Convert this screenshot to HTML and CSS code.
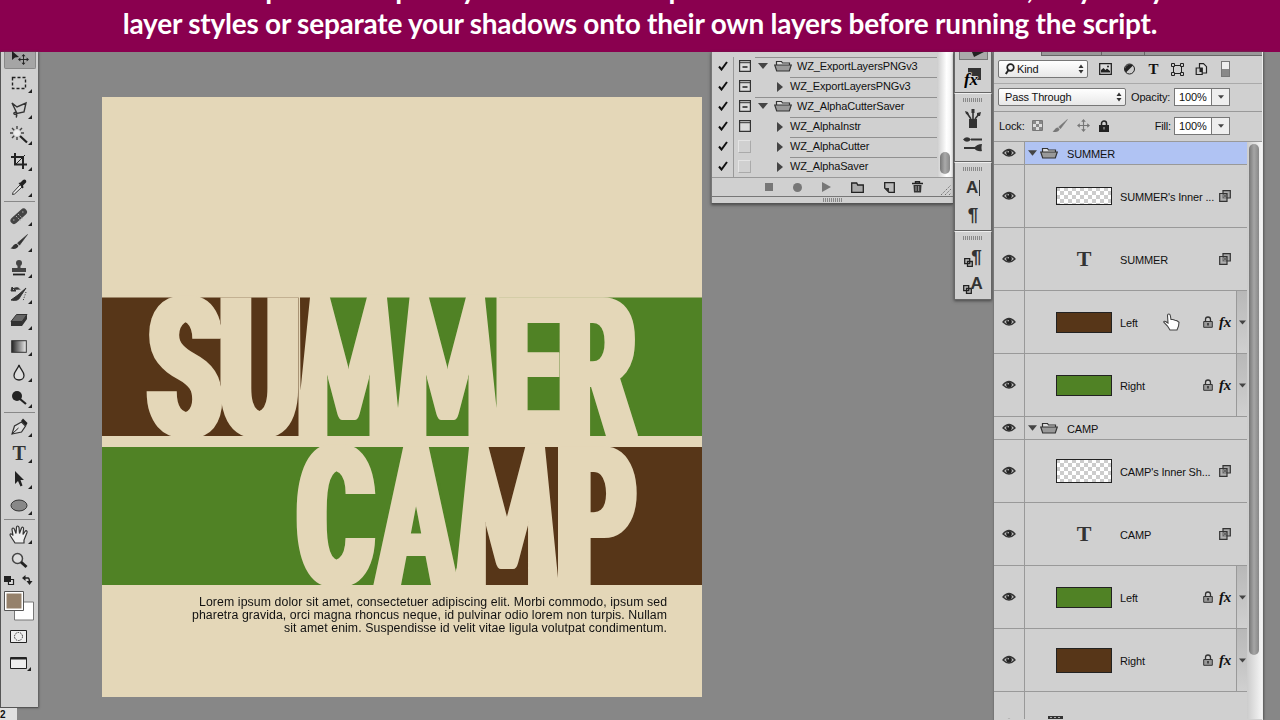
FILE: index.html
```
<!DOCTYPE html>
<html lang="en">
<head>
  <meta charset="UTF-8">
  <meta name="viewport" content="width=device-width, initial-scale=1.0">
  <title>Alpha Cutter Saver</title>
  <link rel="stylesheet" href="styles.css">
</head>
<body>
  <!-- Shared icons -->
  <svg class="defs" width="0" height="0">
    <defs>
      <pattern id="checks" width="8" height="8" patternUnits="userSpaceOnUse">
        <rect width="8" height="8" fill="#fff"/>
        <path d="M0 0h4v4H0zM4 4h4v4H4z" fill="#ccc"/>
      </pattern>
      <linearGradient id="fade"><stop offset="0" stop-color="#222"/><stop offset="1" stop-color="#eee"/></linearGradient>
      <symbol id="eye" viewBox="0 0 14 10">
        <path d="M1 5Q7-2 13 5Q7 11 1 5z" fill="#bbb" stroke="#333" stroke-width="1.3"/>
        <circle cx="7" cy="4.7" r="2.8" fill="#222"/><circle cx="6.2" cy="3.8" r=".8" fill="#ccc"/>
      </symbol>
      <symbol id="folder" viewBox="0 0 18 12">
        <path d="M2.5 5V1.5h5l1 1.5h7V5" fill="#ddd" stroke="#333" stroke-width="1.2"/>
        <path d="M.7 5h16.6l-2 6H2.7z" fill="#999" stroke="#333" stroke-width="1.2"/>
      </symbol>
      <symbol id="check" viewBox="0 0 10 10"><path d="M1 5.5l2.5 3L9 1" fill="none" stroke="#111" stroke-width="2"/></symbol>
      <symbol id="down" viewBox="0 0 10 6"><path d="M0 0h10L5 6z" fill="#444"/></symbol>
      <symbol id="right" viewBox="0 0 6 10"><path d="M0 0v10l6-5z" fill="#444"/></symbol>
      <symbol id="updown" viewBox="0 0 6 10"><path d="M.5 4L3 .5 5.5 4zM.5 6L3 9.500 5.500 6z" fill="#333"/></symbol>
      <symbol id="lock" viewBox="0 0 10 12">
        <path d="M2.500 6V3.500a2.500 2.500 0 0 1 5 0V6" fill="none" stroke="#333" stroke-width="1.300"/>
        <path d="M.7 5.500h8.600v5.800H.7z" fill="#999" stroke="#333"/><path d="M5 7v2.500" stroke="#222" stroke-width="1.400"/>
      </symbol>
      <symbol id="clone" viewBox="0 0 12 12">
        <path d="M4 .7h7.300V8H4z" fill="#aaa" stroke="#333" stroke-width="1.200"/>
        <path d="M.7 3.500H8v7.800H.7z" fill="#999" fill-opacity=".6" stroke="#333" stroke-width="1.200"/>
        <path d="M4.500 4l3 3.500M7.500 4l-3 3.500" stroke="#333" stroke-width=".6"/>
      </symbol>
      <symbol id="panel-full" viewBox="0 0 12 12"><path d="M.6 .6h10.800v10.800H.6z" fill="#ddd" stroke="#333" stroke-width="1.200"/><path d="M1 2.700h10" stroke="#333"/></symbol>
      <symbol id="panel-dash" viewBox="0 0 12 12"><path d="M.6 .6h10.800v10.800H.6z" fill="#ddd" stroke="#333" stroke-width="1.200"/><path d="M1 2.700h10" stroke="#333"/><path d="M3.500 7h5" stroke="#222" stroke-width="1.500"/></symbol>
      <symbol id="arrows" viewBox="0 0 14 14">
        <path d="M7 2v10M2 7h10" stroke="currentColor" stroke-width="1.200"/>
        <path d="M7 0L4.500 3h5zM7 14l-2.500-3h5zM0 7l3-2.500v5zM14 7l-3-2.500v5z" fill="currentColor"/>
      </symbol>
      <symbol id="brush" viewBox="0 0 18 16">
        <path d="M17.500 .5L7.500 9l2 2.200z" fill="currentColor" stroke="currentColor" stroke-width=".6"/>
        <path d="M8.500 11.800C8 14.500 4 15.800 .5 14.200 3 13.500 3 10 6.500 9.800z" fill="currentColor"/>
      </symbol>
      <symbol id="marks" viewBox="0 0 20 4"><path d="M.5 0v4M2.500 0v4M4.500 0v4M6.500 0v4M8.500 0v4M10.500 0v4M12.500 0v4M14.500 0v4M16.500 0v4M18.500 0v4" stroke="#888"/></symbol>
    </defs>
  </svg>

  <div class="banner">
    <p class="banner-top">It is not complete in a split layer and has a drop shadow. Remove them now, only if any</p>
    <p>layer styles or separate your shadows onto their own layers before running the script.</p>
  </div>

  <div class="workspace">
    <!-- Tools -->
    <div class="left">
      <div class="toolbar">
        <div class="tool active"><svg width="20" height="18" viewBox="0 0 20 18"><path d="M2 0v9l3-2.500 4-.5z" fill="#222"/><svg x="8" y="3" width="11" height="11" color="#222"><use href="#arrows"/></svg></svg></div>
        <div class="tool more"><svg width="16" height="16" viewBox="0 0 16 16"><path d="M1.500 2.500h13v11h-13z" fill="none" stroke="#222" stroke-width="1.400" stroke-dasharray="3 2"/></svg></div>
        <div class="tool more"><svg width="18" height="18" viewBox="0 0 18 18"><path d="M2 3l5 4 9-4-2 9-7 1.500zM7 13c-4-2-4 2-1 1.500 1-.5 1 1.500 0 3" fill="none" stroke="#333" stroke-width="1.400"/></svg></div>
        <div class="tool more"><svg width="18" height="18" viewBox="0 0 18 18"><path d="M10 10l7 6.500" stroke="#222" stroke-width="2.200"/><circle cx="7" cy="7" r="3" fill="#eee"/><path d="M7 0v3M7 11v3M0 7h3M11 7h3M2 2l2.200 2.200M12 2L9.800 4.200M2 12l2.200-2.200" stroke="#444" stroke-width="1.400"/></svg></div>
        <div class="tool more"><svg width="16" height="16" viewBox="0 0 16 16"><path d="M4 0v11.500h12M0 4h12v12" fill="none" stroke="#222" stroke-width="2"/><path d="M4.500 11.500L14 2" stroke="#222"/></svg></div>
        <div class="tool more"><svg width="16" height="17" viewBox="0 0 16 17"><path d="M9 6l-7 7.500-.5 2 2-.5 7.500-7" fill="#eee" stroke="#333"/><path d="M7.500 4l2-.5L12 1c2-1.500 4 .5 3 2.500l-3 3 .5 2-1 1z" fill="#222"/></svg></div>
        <div class="rule"></div>
        <div class="tool more"><svg width="18" height="18" viewBox="0 0 18 18"><path d="M4 13.500L13.500 5" stroke="#444" stroke-width="7" stroke-linecap="round"/><path d="M6 9l4.500 4.500M8 7l4.500 4.500M3 13h2M12 5h2" stroke="#aaa" stroke-dasharray="1.500 1"/></svg></div>
        <div class="tool more"><svg class="ink" width="18" height="16"><use href="#brush"/></svg></div>
        <div class="tool more"><svg width="16" height="16" viewBox="0 0 16 16"><circle cx="8" cy="3" r="3" fill="#444"/><path d="M6.500 4h3v4h5.500v4H1V8h5.500z" fill="#444"/><path d="M2 14.500h12" stroke="#222" stroke-width="1.800"/></svg></div>
        <div class="tool more"><svg width="18" height="16" viewBox="0 0 18 16"><path d="M16 2L8 9 1 14c5 1 8 0 9-3z" fill="#333" stroke="#333"/><path d="M2 4c3-3 6-3 8-.5M1 5h5l-4-4z" fill="#333" stroke="#333"/><path d="M16 6l-3 9" stroke="#333" stroke-dasharray="1 1.500"/></svg></div>
        <div class="tool more"><svg width="18" height="14" viewBox="0 0 18 14"><path d="M6.500 1.500H17l-5 7H1z" fill="#666" stroke="#333"/><path d="M1 8.500h11V13H1zM12 8.500l5-7V6l-5 7z" fill="#333"/></svg></div>
        <div class="tool more"><svg width="16" height="13"><rect x=".7" y=".7" width="14.600" height="11.600" fill="url(#fade)" stroke="#333"/></svg></div>
        <div class="tool more"><svg width="12" height="17" viewBox="0 0 12 17"><path d="M6 1c1 4 5 6.500 5 10.500a5 4.500 0 0 1-10 0C1 7.500 5 5 6 1z" fill="#ddd" stroke="#222" stroke-width="1.300"/></svg></div>
        <div class="tool more"><svg width="16" height="16" viewBox="0 0 16 16"><circle cx="6" cy="6" r="5" fill="#222"/><path d="M9 9l6 5" stroke="#222" stroke-width="2.200"/></svg></div>
        <div class="rule"></div>
        <div class="tool more"><svg width="18" height="18" viewBox="0 0 18 18"><path d="M2 16L4.500 8l7-4 4 4-4 6z" fill="#ddd" stroke="#333" stroke-width="1.200"/><path d="M2 16l6.500-6" stroke="#222"/><path d="M11 3l2-2.500 4.500 4.500L16 8z" fill="#222"/></svg></div>
        <div class="tool more type">T</div>
        <div class="tool more"><svg width="12" height="16" viewBox="0 0 12 16"><path d="M2 0v13l3-3 2.500 5.500 2-1L7.500 9H11z" fill="#222"/></svg></div>
        <div class="tool more"><svg width="18" height="13"><ellipse cx="9" cy="6.500" rx="8" ry="5.500" fill="#888" stroke="#333"/></svg></div>
        <div class="rule"></div>
        <div class="tool more"><svg width="20" height="19" viewBox="0 0 20 19"><path d="M6 18L1.500 11C0 8.500 2.500 8 4 10.500L3 4.500C3 2.500 5 2.500 5.500 4.500L7 8.500 7.500 2.500c0-2 2-2 2.500 0L10.500 8.500 12.500 3c.5-1.500 2.500-1 2 1L14 9.500l2-3c1-1.500 2.500-.5 2 1L15 15v3z" fill="#eee" stroke="#333" stroke-width="1.200"/></svg></div>
        <div class="tool"><svg width="17" height="17" viewBox="0 0 17 17"><circle cx="6.500" cy="6.500" r="5" fill="#ddd" stroke="#444" stroke-width="1.500"/><path d="M10 10l5.500 5" stroke="#222" stroke-width="3"/></svg></div>
        <svg class="swatches" width="36" height="104" viewBox="1 573 36 104">
          <path d="M8.500 579.500h5v5h-5z" fill="#ddd" stroke="#222" stroke-width="1.200"/><path d="M4 576h7v6H4z" fill="#222"/>
          <path d="M24 578h4q1.500 0 1.500 5" fill="none" stroke="#222" stroke-width="1.600"/><path d="M22 578l3.500-3v6zM26.500 581h6l-3 4z" fill="#222"/>
          <path d="M14.500 602h19v18h-19z" fill="#fff" stroke="#777"/>
          <path d="M4.500 591.500h19v19h-19z" fill="#fff" stroke="#555"/><path d="M6.500 593.500h15v15h-15z" fill="#95816b"/>
          <path d="M10.500 630.500h16v12h-16z" fill="#eee" stroke="#222"/><circle cx="18.500" cy="636.500" r="4" fill="#eee" stroke="#333" stroke-dasharray="1.500 1"/>
          <path d="M10.500 657.500h16v11h-16z" fill="#eee" stroke="#222"/><path d="M11 658.500h15" stroke="#222" stroke-width="2"/><path d="M31 667v4h-4z" fill="#222"/>
        </svg>
      </div>
      <div class="ruler">2</div>
    </div>

    <!-- Document -->
    <svg class="poster" width="600" height="600" viewBox="102 97 600 600">
      <filter id="widen" x="-5%" width="110%"><feMorphology operator="dilate" radius="5 0"/></filter>
      <rect x="102" y="97" width="600" height="600" fill="#e4d7b8"/>
      <rect x="102" y="297.500" width="218" height="138.500" fill="#573618"/>
      <rect x="320" y="297.500" width="382" height="138.500" fill="#508225"/>
      <rect x="102" y="447" width="378" height="138" fill="#508225"/>
      <rect x="480" y="447" width="222" height="138" fill="#573618"/>
      <!-- each letter is set on its own scale -->
      <g class="headline" filter="url(#widen)">
        <text transform="translate(184.500 436) scale(.6 1)">S</text>
        <text transform="translate(259.500 436) scale(.62 1)">U</text>
        <text class="lato" transform="translate(348.500 436) scale(.5 1)">M</text>
        <text class="lato" transform="translate(447.500 436) scale(.5 1)">M</text>
        <text transform="translate(529 436) scale(.61 1)">E</text>
        <text transform="translate(597 436) scale(.61 1)">R</text>
        <text transform="translate(335.500 585) scale(.59 1)">C</text>
        <text class="thin" transform="translate(416 585) scale(.58 1)">A</text>
        <text class="lato" transform="translate(507 585) scale(.5 1)">M</text>
        <text transform="translate(597.500 585) scale(.61 1)">P</text>
      </g>
      <!-- gaps between the letters close towards the bottom of the band -->
      <path d="M298.500 297h8v139h-8zM390 297h15v139h-15zM490 297h9v139h-9zM456 447h9v138h-9zM549 447h14v138h-14z" fill="#e4d7b8"/>
      <path d="M300 297.500h10l-9.500 93zM545 447h13v131z" fill="#573618"/>
      <path d="M387 297.500h22.500L398 408zM485 297.500h11.500V408zM433 447h36l-12.500 123z" fill="#508225"/>
      <g class="copy">
        <text x="199" y="606" textLength="468">Lorem ipsum dolor sit amet, consectetuer adipiscing elit. Morbi commodo, ipsum sed</text>
        <text x="192" y="619" textLength="475">pharetra gravida, orci magna rhoncus neque, id pulvinar odio lorem non turpis. Nullam</text>
        <text x="284" y="632" textLength="383">sit amet enim. Suspendisse id velit vitae ligula volutpat condimentum.</text>
      </g>
    </svg>

    <!-- Actions -->
    <div class="actions">
      <div class="actions-body">
        <div class="action-list">
          <div class="action head"></div>
          <div class="action"><i><svg width="10" height="10"><use href="#check"/></svg></i><b><svg width="12" height="12"><use href="#panel-dash"/></svg></b><div class="set"><svg width="10" height="6"><use href="#down"/></svg><svg width="18" height="12"><use href="#folder"/></svg>WZ_ExportLayersPNGv3</div></div>
          <div class="action"><i><svg width="10" height="10"><use href="#check"/></svg></i><b><svg width="12" height="12"><use href="#panel-dash"/></svg></b><div class="set child"><svg width="6" height="10"><use href="#right"/></svg><span>WZ_ExportLayersPNGv3</span></div></div>
          <div class="action"><i><svg width="10" height="10"><use href="#check"/></svg></i><b><svg width="12" height="12"><use href="#panel-dash"/></svg></b><div class="set"><svg width="10" height="6"><use href="#down"/></svg><svg width="18" height="12"><use href="#folder"/></svg>WZ_AlphaCutterSaver</div></div>
          <div class="action"><i><svg width="10" height="10"><use href="#check"/></svg></i><b><svg width="12" height="12"><use href="#panel-full"/></svg></b><div class="set child"><svg width="6" height="10"><use href="#right"/></svg><span>WZ_AlphaInstr</span></div></div>
          <div class="action"><i><svg width="10" height="10"><use href="#check"/></svg></i><b><em></em></b><div class="set child"><svg width="6" height="10"><use href="#right"/></svg><span>WZ_AlphaCutter</span></div></div>
          <div class="action"><i><svg width="10" height="10"><use href="#check"/></svg></i><b><em></em></b><div class="set child"><svg width="6" height="10"><use href="#right"/></svg><span>WZ_AlphaSaver</span></div></div>
        </div>
        <div class="track"><div class="thumb"></div></div>
      </div>
      <div class="actions-foot">
        <svg width="8" height="8"><rect width="8" height="8" fill="#777"/></svg>
        <svg width="9" height="9"><circle cx="4.500" cy="4.500" r="4.500" fill="#777"/></svg>
        <svg width="9" height="10" viewBox="0 0 9 10"><path d="M0 0v10l9-5z" fill="#777"/></svg>
        <svg width="13" height="11" viewBox="0 0 13 11"><path d="M.7 1h5l1 2h5.600v7.300H.7z" fill="#aaa" stroke="#222" stroke-width="1.300"/></svg>
        <svg width="11" height="11" viewBox="0 0 11 11"><path d="M.7 .7h9.600v9.600H5L.7 6z" fill="#bbb" stroke="#222" stroke-width="1.300"/><path d="M.7 6H5v4.500z" fill="#333"/></svg>
        <svg width="11" height="12" viewBox="0 0 11 12"><path d="M0 2.500h11M3.500 2V.7h4V2" stroke="#222" stroke-width="1.400" fill="none"/><path d="M1.500 4h8l-.5 7.500H2z" fill="#333"/><path d="M4 5v5M6.700 5v5" stroke="#bbb" stroke-width=".8"/></svg>
        <svg class="corner" width="10" height="10" viewBox="0 0 10 10"><path d="M0 10L10 0M4 10l6-6M8 10l2-2" stroke="#666" stroke-dasharray="1.200 1.200"/></svg>
      </div>
      <div class="actions-grip"><svg width="20" height="4"><use href="#marks"/></svg></div>
    </div>

    <!-- Collapsed panels -->
    <div class="dock">
      <div class="dock-group first">
        <div class="pressed"><svg width="12" height="6"><path d="M0 0h12L2 5z" fill="#222"/></svg></div>
        <svg width="18" height="21" viewBox="0 0 18 21"><path d="M4 1h13v12h-4V9H8L6 7H4z" fill="#333"/><text x="0" y="18" class="fx-big">fx</text></svg>
      </div>
      <div class="dock-group">
        <svg width="20" height="4"><use href="#marks"/></svg>
        <svg width="18" height="20" viewBox="0 0 18 20"><path d="M5 10h8v9H5z" fill="#333"/><path d="M7 10L3 4M9 10V3M11 10l4-5" stroke="#333" stroke-width="1.600"/><path d="M1 2l3 1 1 3-3-1zM7.500 0h3v4h-3zM13 4l4-1-1 4-3 0z" fill="#333"/></svg>
        <svg width="20" height="16" viewBox="0 0 20 16"><path d="M8 3.500h11M1 12h11" stroke="#333" stroke-width="2"/><path d="M0 3.500Q4-1 8 3.500 4 8 0 3.500zM11 12q3-4 8-4-1 4 0 7-5 1-8-3z" fill="#333"/></svg>
      </div>
      <div class="dock-group">
        <svg width="20" height="4"><use href="#marks"/></svg>
        <div class="glyph">A<u></u></div>
        <div class="glyph para">¶</div>
      </div>
      <div class="dock-group">
        <svg width="20" height="4"><use href="#marks"/></svg>
        <div class="glyph styled para"><svg width="9" height="9" viewBox="0 0 9 9"><path d="M.7 .7h5v5h-5zM3.500 3.500h4.800v4.800H3.500z" fill="#bbb" stroke="#222" stroke-width="1.300"/></svg>¶</div>
        <div class="glyph styled"><svg width="9" height="9" viewBox="0 0 9 9"><path d="M.7 .7h5v5h-5zM3.500 3.500h4.800v4.800H3.500z" fill="#bbb" stroke="#222" stroke-width="1.300"/></svg>A</div>
      </div>
    </div>

    <!-- Layers -->
    <div class="layers">
      <div class="tabs"><span></span><span></span><span></span></div>
      <div class="filters">
        <div class="select kind"><svg width="10" height="12" viewBox="0 0 10 12"><circle cx="5.500" cy="4.500" r="3.300" fill="none" stroke="#222" stroke-width="1.700"/><path d="M3.500 7L.8 11" stroke="#222" stroke-width="2"/></svg>Kind<svg class="end" width="6" height="10"><use href="#updown"/></svg></div>
        <svg width="13" height="12" viewBox="0 0 13 12"><path d="M.7 .7h11.600v10.600H.7z" fill="#ddd" stroke="#222" stroke-width="1.300"/><path d="M2 9.500V7l2.500-2 2 2L8 5.500 11 8v1.500z" fill="#222"/><circle cx="9" cy="3.500" r="1" fill="#222"/></svg>
        <svg width="13" height="12" viewBox="0 0 12 12"><circle cx="6" cy="6" r="5" fill="#ccc" stroke="#222"/><path d="M2.500 9.500A5 5 0 0 1 9.500 2.500z" fill="#222"/></svg>
        <div class="t-small">T</div>
        <svg width="13" height="13" viewBox="0 0 13 13"><path d="M2.500 2.500h8v8h-8z" fill="none" stroke="#222"/><path d="M.5 .5h3v3h-3zM9.500 .5h3v3h-3zM.5 9.500h3v3h-3zM9.500 9.500h3v3h-3z" fill="#ccc" stroke="#222"/></svg>
        <svg width="13" height="13" viewBox="0 0 12 13"><path d="M4 .7h4l3 3V10H4z" fill="#ddd" stroke="#222" stroke-width="1.200"/><path d="M.7 5h6v6.500h-6z" fill="#ccc" stroke="#222" stroke-width="1.200"/><path d="M4 5h3v4H4z" fill="#222"/></svg>
        <div class="switch"></div>
      </div>
      <div class="blend">
        <div class="select mode">Pass Through<svg class="end" width="6" height="10"><use href="#updown"/></svg></div>
        <label>Opacity:</label>
        <div class="value">100%<span><svg width="6" height="4"><use href="#down"/></svg></span></div>
      </div>
      <div class="blend locks">
        <label>Lock:</label>
        <svg width="11" height="11" viewBox="0 0 11 11"><path d="M.5 .5h10v10H.5z" fill="#ddd" stroke="#777"/><path d="M1 1h3v3H1zM7 1h3v3H7zM4 4h3v3H4zM1 7h3v3H1zM7 7h3v3H7z" fill="#888"/></svg>
        <svg class="dim" width="16" height="14"><use href="#brush"/></svg>
        <svg class="dim" width="13" height="13"><use href="#arrows"/></svg>
        <svg width="10" height="12" viewBox="0 0 10 12"><path d="M2.500 6V3.500a2.500 2.500 0 0 1 5 0V6" fill="none" stroke="#222" stroke-width="1.500"/><path d="M0 5h10v7H0z" fill="#222"/><path d="M5 7v2.500" stroke="#bbb"/></svg>
        <label class="fill">Fill:</label>
        <div class="value">100%<span><svg width="6" height="4"><use href="#down"/></svg></span></div>
      </div>
      <div class="layer-area">
        <div class="layer-list">
          <div class="layer group selected">
            <div class="vis"><svg width="14" height="10"><use href="#eye"/></svg></div>
            <svg width="9" height="6"><use href="#down"/></svg><svg width="18" height="12"><use href="#folder"/></svg><span>SUMMER</span>
          </div>
          <div class="layer">
            <div class="vis"><svg width="14" height="10"><use href="#eye"/></svg></div>
            <div class="thumbnail"><svg width="56" height="18"><rect x=".5" y=".5" width="55" height="17" fill="url(#checks)" stroke="#222"/></svg></div>
            <span>SUMMER's Inner ...</span>
            <svg class="badge" width="12" height="12"><use href="#clone"/></svg>
          </div>
          <div class="layer">
            <div class="vis"><svg width="14" height="10"><use href="#eye"/></svg></div>
            <div class="thumbnail type">T</div>
            <span>SUMMER</span>
            <svg class="badge" width="12" height="12"><use href="#clone"/></svg>
          </div>
          <div class="layer">
            <div class="vis"><svg width="14" height="10"><use href="#eye"/></svg></div>
            <div class="thumbnail"><div class="color brown"></div></div>
            <span>Left</span>
            <svg class="padlock" width="10" height="12"><use href="#lock"/></svg><em>fx</em>
            <div class="expand"><svg width="7" height="5"><use href="#down"/></svg></div>
          </div>
          <div class="layer">
            <div class="vis"><svg width="14" height="10"><use href="#eye"/></svg></div>
            <div class="thumbnail"><div class="color green"></div></div>
            <span>Right</span>
            <svg class="padlock" width="10" height="12"><use href="#lock"/></svg><em>fx</em>
            <div class="expand"><svg width="7" height="5"><use href="#down"/></svg></div>
          </div>
          <div class="layer group">
            <div class="vis"><svg width="14" height="10"><use href="#eye"/></svg></div>
            <svg width="9" height="6"><use href="#down"/></svg><svg width="18" height="12"><use href="#folder"/></svg><span>CAMP</span>
          </div>
          <div class="layer">
            <div class="vis"><svg width="14" height="10"><use href="#eye"/></svg></div>
            <div class="thumbnail"><svg width="56" height="24"><rect x=".5" y=".5" width="55" height="23" fill="url(#checks)" stroke="#222"/></svg></div>
            <span>CAMP's Inner Sh...</span>
            <svg class="badge" width="12" height="12"><use href="#clone"/></svg>
          </div>
          <div class="layer">
            <div class="vis"><svg width="14" height="10"><use href="#eye"/></svg></div>
            <div class="thumbnail type">T</div>
            <span>CAMP</span>
            <svg class="badge" width="12" height="12"><use href="#clone"/></svg>
          </div>
          <div class="layer">
            <div class="vis"><svg width="14" height="10"><use href="#eye"/></svg></div>
            <div class="thumbnail"><div class="color green"></div></div>
            <span>Left</span>
            <svg class="padlock" width="10" height="12"><use href="#lock"/></svg><em>fx</em>
            <div class="expand"><svg width="7" height="5"><use href="#down"/></svg></div>
          </div>
          <div class="layer">
            <div class="vis"><svg width="14" height="10"><use href="#eye"/></svg></div>
            <div class="thumbnail"><div class="color brown tall"></div></div>
            <span>Right</span>
            <svg class="padlock" width="10" height="12"><use href="#lock"/></svg><em>fx</em>
            <div class="expand"><svg width="7" height="5"><use href="#down"/></svg></div>
          </div>
          <div class="layer last">
            <div class="vis"><svg width="14" height="10"><use href="#eye"/></svg></div>
            <div class="warp"><svg width="15" height="12"><path d="M0 0h15v5h-2V3h-4v9H6V3H2v2H0z" fill="#333"/><path d="M2 1.500h11" stroke="#aaa" stroke-dasharray="2 2"/></svg></div>
          </div>
        </div>
        <div class="layer-track"><div class="layer-thumb"></div></div>
      </div>
    </div>
  </div>

  <svg class="cursor" width="17" height="18" viewBox="0 0 17 18"><path d="M7 17L4.500 13 1 9.500C0 8 2 7.500 4 9.500L5 10 4.500 2.500c0-2 2.500-2 2.800 0L8 6.500l2 0 2 .7 2 .5 2 1.500-.5 4L14 17z" fill="#fff" stroke="#444" stroke-width="1.100"/></svg>
</body>
</html>
```
FILE: styles.css
```
* {
  box-sizing: border-box;
}

body {
  margin: 0;
  width: 1280px;
  height: 720px;
  overflow: hidden;
  background: #878787;
  color: #111;
  font-family: "Liberation Sans", Arial, sans-serif;
  font-size: 11px;
  letter-spacing: -0.15px;
}

svg {
  display: block;
  flex: none;
}

.defs {
  position: absolute;
}

/* Banner */
.banner {
  height: 52px;
  overflow: hidden;
  background: #8a004f;
  color: #fff;
  display: flex;
  flex-direction: column;
  justify-content: flex-end;
  align-items: center;
  padding-bottom: 11px;
}

.banner p {
  margin: 0;
  font-family: Lato, sans-serif;
  font-weight: 700;
  font-size: 28px;
  letter-spacing: -0.23px;
  line-height: 35px;
  white-space: nowrap;
}

.workspace {
  display: flex;
  align-items: flex-start;
  height: 668px;
}

/* Tools */
.left {
  width: 38px;
  height: 668px;
  flex: none;
}

.toolbar {
  height: 656px;
  width: 38px;
  background: #d0d0d0;
  border-left: 1px solid #555;
  border-bottom: 1px solid #555;
  box-shadow: 1px 0 2px #555;
}

.tool {
  position: relative;
  height: 26px;
  padding-right: 1px;
  display: flex;
  align-items: center;
  justify-content: center;
}

.tool.active {
  height: 17px;
  margin: 0 2px 1px 3px;
  background: #a5a5a5;
  border: 1px solid #888;
  border-top: none;
  border-radius: 0 0 2px 2px;
}

.more::after {
  content: "";
  position: absolute;
  right: 6px;
  bottom: 3px;
  border: 2px solid #222;
  border-top-color: transparent;
  border-left-color: transparent;
}

.type {
  font: bold 20px "Liberation Serif", serif;
  color: #333;
}

.ink {
  color: #333;
}

.rule {
  height: 1px;
  margin: 1px 3px;
  background: #888;
}

.ruler {
  width: 17px;
  height: 12px;
  background: #e0e0e0;
  font-size: 10px;
  line-height: 13px;
  font-weight: bold;
}

/* Document */
.poster {
  margin: 45px 9px 0 64px;
}

.headline {
  font-family: Roboto, sans-serif;
  font-weight: 900;
  font-size: 195px;
  letter-spacing: 0;
  text-anchor: middle;
  fill: #e4d7b8;
}

.headline .lato {
  font-family: Lato, sans-serif;
}

.headline .thin {
  font-weight: 700;
}

.copy {
  font-size: 12.3px;
  letter-spacing: 0;
  fill: #111;
}

/* Actions panel */
.actions {
  width: 242px;
  height: 152px;
  flex: none;
  background: #d0d0d0;
  border-left: 1px solid #777;
  border-bottom: 1px solid #555;
  box-shadow: 0 1px 3px #444;
}

.actions-body {
  display: flex;
  height: 125px;
}

.action-list {
  width: 225px;
}

.action {
  display: flex;
  height: 20px;
}

.action.head {
  height: 5px;
  padding-left: 21px;
}

.action i,
.action b {
  width: 22px;
  padding-bottom: 2px;
  display: flex;
  align-items: center;
  justify-content: center;
  border-right: 1px solid #999;
}

.action b {
  width: 21px;
  border: none;
}

.action em {
  width: 13px;
  height: 13px;
  border: 1px solid #e4e4e4;
  border-right-color: #aaa;
  border-bottom-color: #aaa;
}

.set {
  flex: 1;
  display: flex;
  align-items: center;
  gap: 7px;
  padding: 0 0 3px 3px;
  font-size: 11px;
  border-top: 1px solid #909090;
}

.set svg + svg {
  margin: 0 -2px 0 -1px;
}

.set.child {
  border-top: none;
  padding: 0 0 0 22px;
}

.set.child span {
  flex: 1;
  height: 20px;
  line-height: 17px;
  border-top: 1px solid #909090;
}

.track {
  flex: 1;
  display: flex;
  align-items: flex-end;
  justify-content: center;
  padding-bottom: 3px;
  background: linear-gradient(90deg, #ccc, #fff 60%, #eee);
}

.thumb {
  width: 10px;
  height: 22px;
  border-radius: 5px;
  background: linear-gradient(90deg, #777, #aaa, #888);
}

.actions-foot {
  display: flex;
  align-items: center;
  height: 19px;
  padding-left: 53px;
  gap: 20px;
  border-top: 1px solid #999;
}

.actions-foot svg:nth-child(6) {
  margin-left: -3px;
}

.actions-foot .corner {
  margin: 5px 0 0 -2px;
}

.actions-grip {
  display: flex;
  justify-content: center;
  height: 7px;
  padding-top: 1px;
  border-top: 1px solid #777;
}

/* Collapsed panels */
.dock {
  width: 38px;
  margin: 0 1px 0 1px;
  flex: none;
  box-shadow: 0 1px 3px #444;
}

.dock-group {
  height: 69px;
  display: flex;
  flex-direction: column;
  align-items: center;
  gap: 7px;
  padding-top: 4px;
  background: #d0d0d0;
  border: 1px solid #666;
  border-top-color: #eee;
}

.dock-group.first {
  height: 41px;
  padding-top: 0;
  border-top: none;
}

.pressed {
  width: 29px;
  height: 8px;
  padding-left: 12px;
  background: #aaa;
  border: 1px solid #777;
  border-top: none;
}

.fx-big {
  font: italic bold 17px "Liberation Serif", serif;
  stroke: #d0d0d0;
  stroke-width: 1.5px;
  paint-order: stroke;
}

.glyph {
  height: 20px;
  display: flex;
  align-items: center;
  font-size: 17px;
  font-weight: bold;
  color: #333;
}

.glyph.para {
  font-size: 19px;
}

.glyph u {
  width: 1px;
  height: 16px;
  margin-left: 1px;
  background: #333;
}

.glyph.styled svg {
  margin: 10px -2px 0 0;
}

/* Layers panel */
.layers {
  width: 270px;
  height: 668px;
  flex: none;
  background: #d0d0d0;
  border-left: 1px solid #777;
  border-right: 1px solid #eee;
  box-shadow: 1px 0 2px #555;
}

.tabs {
  display: flex;
  height: 4px;
  padding-left: 47px;
}

.tabs span {
  width: 60px;
  background: #999;
  border: 1px solid #666;
  border-top: none;
  border-right: none;
}

.tabs span:nth-child(2) {
  width: 43px;
}

.tabs span:nth-child(3) {
  flex: 1;
}

.filters {
  display: flex;
  align-items: center;
  height: 28px;
  padding: 0 0 1px 4px;
  gap: 11px;
  border-bottom: 1px solid #aaa;
}

.select {
  display: flex;
  align-items: center;
  height: 18px;
  padding: 0 3px 1px 6px;
  background: linear-gradient(#fff, #e8e8e8);
  border: 1px solid #777;
  border-radius: 2px;
}

.select .end {
  margin-left: auto;
}

.kind {
  width: 90px;
  gap: 2px;
}

.t-small {
  width: 13px;
  text-align: center;
  font: bold 15px "Liberation Serif", serif;
}

.switch {
  width: 9px;
  height: 16px;
  margin-left: 2px;
  border: 1px solid #777;
  background: linear-gradient(#eee 50%, #888 50%);
}

.blend {
  display: flex;
  align-items: center;
  height: 28px;
  padding: 0 0 1px 4px;
  border-bottom: 1px solid #999;
}

.mode {
  width: 128px;
  margin-right: 5px;
}

.value {
  display: flex;
  align-items: center;
  justify-content: space-between;
  width: 56px;
  height: 18px;
  padding-left: 4px;
  margin-left: auto;
  margin-right: 32px;
  background: #fff;
  border: 1px solid #777;
}

.value span {
  width: 18px;
  height: 16px;
  display: flex;
  align-items: center;
  justify-content: center;
  border-left: 1px solid #777;
  background: #eee;
}

.locks {
  height: 30px;
  padding: 0 0 2px 5px;
  border-bottom: 1px solid #999;
}

.locks > svg {
  margin-left: 7px;
}

.locks > svg + svg {
  margin-left: 9px;
}

.dim {
  color: #777;
}

.fill {
  margin-left: auto;
}

.locks .value {
  margin-left: 3px;
}

.layer-area {
  display: flex;
  height: 577px;
  overflow: hidden;
}

.layer-list {
  width: 253px;
}

.layer {
  display: flex;
  align-items: center;
  height: 63px;
  border-bottom: 1px solid #999;
}

.layer > span {
  padding-top: 2px;
}

.layer.group {
  height: 23px;
}

.layer.group > svg {
  margin-left: 3px;
}

.layer.group > span {
  margin-left: 9px;
}

.layer.selected {
  background: linear-gradient(90deg, #d0d0d0 30px, #b0c3f3 30px);
}

.vis {
  width: 31px;
  height: 100%;
  padding-right: 1px;
  display: flex;
  align-items: center;
  justify-content: center;
  border-right: 1px solid #999;
}

.thumbnail {
  width: 56px;
  margin: 0 8px 0 31px;
  text-align: center;
}

.thumbnail.type {
  font-size: 22px;
}

.color {
  height: 21px;
  border: 1px solid #222;
}

.color.tall {
  height: 25px;
}

.brown {
  background: #573618;
}

.green {
  background: #508225;
}

.badge {
  margin: 0 16px 0 auto;
}

.padlock {
  margin-left: auto;
}

.layer em {
  width: 23px;
  padding-left: 6px;
  font: italic bold 15px "Liberation Serif", serif;
}

.expand {
  width: 11px;
  height: 62px;
  display: flex;
  align-items: center;
  justify-content: center;
  border-left: 1px solid #999;
  background: linear-gradient(#b8b8b8, #d0d0d0);
}

.layer.last {
  align-items: flex-start;
}

.warp {
  margin: 24px 0 0 23px;
}

.layer-track {
  width: 15px;
  padding: 2px 2px 0;
  background: linear-gradient(90deg, #ccc, #f5f5f5);
}

.layer-thumb {
  width: 10px;
  height: 511px;
  border-radius: 5px;
  background: linear-gradient(90deg, #777, #a5a5a5, #888);
}

.cursor {
  position: absolute;
  left: 1163px;
  top: 313px;
}
```
